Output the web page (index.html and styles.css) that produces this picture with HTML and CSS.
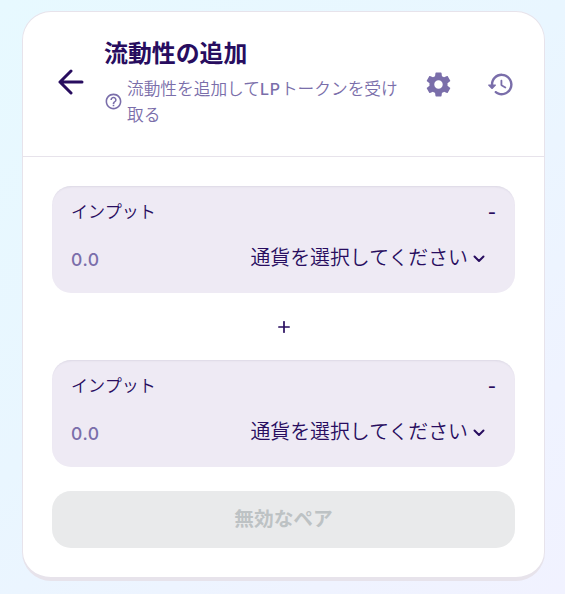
FILE: index.html
```html
<!DOCTYPE html>
<html lang="ja">
  <head>
    <meta charset="UTF-8" />
    <meta name="viewport" content="width=device-width, initial-scale=1.0" />
    <title>流動性の追加</title>
    <link rel="stylesheet" href="styles.css">
  </head>
  <body>
    <main class="card">
      <header class="card-header">
        <a class="back" href="#" aria-label="戻る">
          <svg width="26" height="26" viewBox="0 0 26 26">
            <path d="M24 13H2M13 2L2 13l11 11" />
          </svg>
        </a>
        <div class="heading">
          <h2>流動性の追加</h2>
          <div class="subtitle">
            <svg class="help" width="19" height="19" viewBox="0 0 24 24">
              <path d="M11 18h2v-2h-2v2zm1-16C6.48 2 2 6.48 2 12s4.48 10 10 10 10-4.48 10-10S17.52 2 12 2zm0 18c-4.41 0-8-3.59-8-8s3.59-8 8-8 8 3.59 8 8-3.59 8-8 8zm0-14c-2.21 0-4 1.79-4 4h2c0-1.1.9-2 2-2s2 .9 2 2c0 2-3 1.75-3 5h2c0-2.25 3-2.5 3-5 0-2.21-1.79-4-4-4z" />
            </svg>
            <p>流動性を追加して<span class="latin">LP</span>トークンを受け取る</p>
          </div>
        </div>
        <div class="actions">
          <button class="icon-btn" aria-label="設定">
            <svg width="29" height="29" viewBox="0 0 24 24">
              <path d="M19.43 12.98c.04-.32.07-.64.07-.98s-.03-.66-.07-.98l2.11-1.65c.19-.15.24-.42.12-.64l-2-3.46c-.12-.22-.39-.3-.61-.22l-2.49 1c-.52-.4-1.08-.73-1.69-.98l-.38-2.65C14.46 2.18 14.25 2 14 2h-4c-.25 0-.46.18-.49.42l-.38 2.65c-.61.25-1.17.59-1.69.98l-2.49-1c-.23-.09-.49 0-.61.22l-2 3.46c-.13.22-.07.49.12.64l2.11 1.65c-.04.32-.07.65-.07.98s.03.66.07.98l-2.11 1.65c-.19.15-.24.42-.12.64l2 3.46c.12.22.39.3.61.22l2.49-1c.52.4 1.08.73 1.69.98l.38 2.65c.03.24.24.42.49.42h4c.25 0 .46-.18.49-.42l.38-2.65c.61-.25 1.17-.59 1.69-.98l2.49 1c.23.09.49 0 .61-.22l2-3.46c.12-.22.07-.49-.12-.64l-2.11-1.65zM12 15.5c-1.93 0-3.5-1.57-3.5-3.5s1.57-3.5 3.5-3.5 3.5 1.57 3.5 3.5-1.57 3.5-3.5 3.5z" />
            </svg>
          </button>
          <button class="icon-btn" aria-label="履歴">
            <svg width="29" height="29" viewBox="0 0 24 24">
              <path d="M13.26 3C8.17 2.86 4 6.95 4 12H2.21c-.45 0-.67.54-.35.85l2.79 2.8c.2.2.51.2.71 0l2.79-2.8c.31-.31.09-.85-.36-.85H6c0-3.9 3.18-7.05 7.1-7 3.72.05 6.85 3.18 6.9 6.9.05 3.91-3.1 7.1-7 7.1-1.61 0-3.1-.55-4.28-1.48-.4-.31-.96-.28-1.32.08-.42.42-.39 1.13.08 1.49C9 20.29 10.91 21 13 21c5.05 0 9.14-4.17 9-9.26-.13-4.69-4.05-8.61-8.74-8.74zm-.51 5c-.41 0-.75.34-.75.75v3.68c0 .35.19.68.49.86l3.12 1.85c.36.21.82.09 1.03-.26.21-.36.09-.82-.26-1.03l-2.88-1.71v-3.4c0-.4-.34-.74-.75-.74z" />
            </svg>
          </button>
        </div>
      </header>

      <div class="card-body">
        <section class="currency-box">
          <div class="row">
            <span class="label">インプット</span>
            <span class="balance">-</span>
          </div>
          <div class="row input-row">
            <input class="amount" type="text" placeholder="0.0" aria-label="金額" />
            <button class="select">
              通貨を選択してください
              <svg width="12" height="8" viewBox="0 0 12 8">
                <path d="M1.5 1.5L6 6l4.5-4.5" />
              </svg>
            </button>
          </div>
        </section>

        <div class="plus">
          <svg width="12" height="12" viewBox="0 0 12 12">
            <path d="M6 .8v10.4M.8 6h10.4" />
          </svg>
        </div>

        <section class="currency-box">
          <div class="row">
            <span class="label">インプット</span>
            <span class="balance">-</span>
          </div>
          <div class="row input-row">
            <input class="amount" type="text" placeholder="0.0" aria-label="金額" />
            <button class="select">
              通貨を選択してください
              <svg width="12" height="8" viewBox="0 0 12 8">
                <path d="M1.5 1.5L6 6l4.5-4.5" />
              </svg>
            </button>
          </div>
        </section>

        <button class="submit" disabled>無効なペア</button>
      </div>
    </main>
  </body>
</html>
```

FILE: styles.css
```css
:root {
  --text: #280d5f;
  --subtle: #7a6eaa;
  --border: #e7e3eb;
  --input: #eeeaf4;
  --disabled: #e9eaeb;
  --disabled-text: #bdc2c4;
}

* {
  box-sizing: border-box;
}

body {
  margin: 0;
  min-height: 594px;
  padding: 11px 20px 13px 22px;
  font-family: "Noto Sans CJK JP", sans-serif;
  font-weight: 350;
  color: var(--text);
  background: linear-gradient(140deg, #e7f9ff 0%, #e9f6ff 45%, #eff3ff 80%, #f1f2ff 100%);
}

h2,
p {
  margin: 0;
}

button {
  padding: 0;
  border: none;
  background: none;
  font: inherit;
  color: inherit;
  cursor: pointer;
}

svg {
  display: block;
  flex-shrink: 0;
}

.card {
  height: 570px;
  border: 1px solid var(--border);
  border-bottom-width: 4px;
  border-radius: 29px;
  background-color: white;
}

.card-header {
  display: flex;
  height: 145px;
  padding: 22px 29px 0 35px;
  border-bottom: 1px solid var(--border);
}

.back {
  margin-top: 35px;
}

.back svg {
  fill: none;
  stroke: var(--text);
  stroke-width: 3;
  stroke-linecap: round;
  stroke-linejoin: round;
}

.heading {
  width: 298px;
  margin-left: 20px;
}

.heading h2 {
  font-size: 23.9px;
  line-height: 36px;
  font-weight: 700;
}

.subtitle {
  display: flex;
  align-items: center;
  gap: 4px;
  margin-top: 6px;
  color: var(--subtle);
}

.subtitle p {
  font-size: 16.7px;
  line-height: 25px;
}

.latin {
  font-family: Inter, sans-serif;
  font-size: 16px;
  font-weight: 500;
  letter-spacing: 0.8px;
}

.help,
.icon-btn svg {
  fill: var(--subtle);
}

.actions {
  display: flex;
  align-items: flex-start;
  gap: 33px;
  margin: 36px 0 0 auto;
}

.card-body {
  padding: 29px;
}

.currency-box {
  height: 107px;
  padding: 9px 19px 0;
  border-radius: 19px;
  background-color: var(--input);
  box-shadow: inset 0 2px 2px -1px rgba(74, 74, 104, 0.1);
}

.row {
  display: flex;
  justify-content: space-between;
  align-items: center;
  height: 30px;
}

.label {
  font-size: 17.1px;
}

.balance {
  padding-top: 5px;
  font-family: Inter, sans-serif;
  font-size: 18px;
  font-weight: 500;
}

.input-row {
  height: 36px;
  margin-top: 14px;
  padding-right: 11px;
}

.amount {
  width: 120px;
  padding: 5px 0 0;
  border: none;
  outline: none;
  background: none;
  font-family: Inter, sans-serif;
  font-size: 17.5px;
  font-weight: 500;
  letter-spacing: 0.6px;
}

.amount::placeholder {
  color: var(--subtle);
  opacity: 1;
}

.select {
  display: flex;
  align-items: center;
  gap: 5px;
  font-size: 19.9px;
  line-height: 30px;
}

.select svg {
  margin-top: 3px;
}

.select svg,
.plus svg {
  fill: none;
  stroke: var(--text);
  stroke-width: 2;
  stroke-linecap: round;
  stroke-linejoin: round;
}

.plus {
  display: flex;
  justify-content: center;
  align-items: center;
  height: 67px;
}

.plus svg {
  stroke-width: 1.7;
}

.submit {
  width: 100%;
  height: 57px;
  margin-top: 24px;
  padding-bottom: 4px;
  border-radius: 19px;
  background-color: var(--disabled);
  color: var(--disabled-text);
  font-size: 19.7px;
  font-weight: 700;
  cursor: not-allowed;
}
```
